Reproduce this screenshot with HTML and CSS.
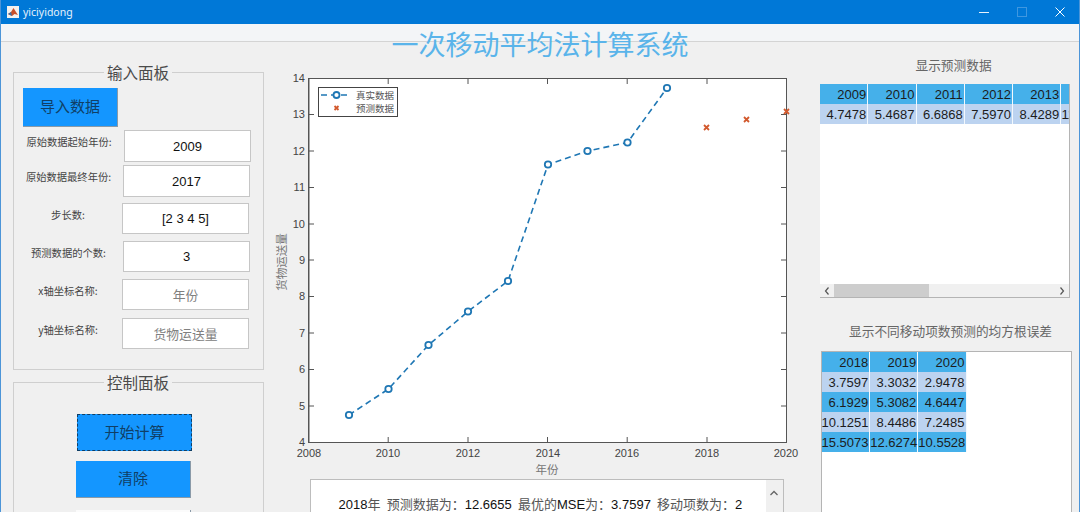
FILE: index.html
```html
<!DOCTYPE html>
<html lang="zh">
<head>
    <meta charset="UTF-8">
    <title>yiciyidong</title>
    <link rel="stylesheet" href="styles.css">
</head>
<body>
<div class="window">
    <div class="titlebar">
        <svg class="app-icon" viewBox="0 0 12 12" width="12" height="12">
            <rect width="12" height="12" fill="#f4f1ee"/>
            <path d="M1 8 L4 6 L6.5 2 L9 6 L11 9 L7.5 8 L5 10 Z" fill="#c8502a"/>
            <path d="M1 8 L4 6 L5 10 Z" fill="#3d6fa5"/>
        </svg>
        <span class="app-name">yiciyidong</span>
        <div class="win-buttons">
            <svg width="10" height="10" viewBox="0 0 10 10"><path d="M0 5.5 H10" stroke="#e8f2fb" fill="none"/></svg>
            <svg width="10" height="10" viewBox="0 0 10 10"><rect x="0.5" y="0.5" width="9" height="9" stroke="#3f97e0" fill="none"/></svg>
            <svg width="10" height="10" viewBox="0 0 10 10"><path d="M0.5 0.5 L9.5 9.5 M9.5 0.5 L0.5 9.5" stroke="#fff" fill="none"/></svg>
        </div>
    </div>
    <div class="toolbar"></div>
    <h1 class="heading">一次移动平均法计算系统</h1>

    <div class="content">
        <div class="left">
            <div class="panel panel-input">
                <div class="panel-title">输入面板</div>
                <button class="btn btn-import">导入数据</button>
                <div class="row row1"><label>原始数据起始年份:</label><div class="field">2009</div></div>
                <div class="row row2"><label>原始数据最终年份:</label><div class="field">2017</div></div>
                <div class="row row3"><label>步长数:</label><div class="field">[2 3 4 5]</div></div>
                <div class="row row4"><label>预测数据的个数:</label><div class="field">3</div></div>
                <div class="row row5"><label>x轴坐标名称:</label><div class="field muted">年份</div></div>
                <div class="row row6"><label>y轴坐标名称:</label><div class="field muted">货物运送量</div></div>
            </div>
            <div class="panel panel-control">
                <div class="panel-title">控制面板</div>
                <button class="btn btn-start">开始计算</button>
                <button class="btn btn-clear">清除</button>
                <button class="btn btn-exit"></button>
            </div>
        </div>

        <div class="middle">
            <svg class="chart" viewBox="270 58 540 421" width="540" height="421">
                <rect x="308.5" y="78.5" width="478" height="364" fill="#fff" stroke="#555"/>
                <path d="M309.5 79V442" stroke="#aaa" fill="none"/>
                <g stroke="#555" fill="none">
                    <path d="M388.2 442V437 M468 442V437 M547.5 442V437 M627.2 442V437 M707 442V437"/>
                    <path d="M388.2 79V84 M468 79V84 M547.5 79V84 M627.2 79V84 M707 79V84"/>
                    <path d="M309 406H314 M309 369.5H314 M309 333H314 M309 296.5H314 M309 260H314 M309 224H314 M309 187.5H314 M309 151H314 M309 114.5H314"/>
                    <path d="M786 406H781 M786 369.5H781 M786 333H781 M786 296.5H781 M786 260H781 M786 224H781 M786 187.5H781 M786 151H781 M786 114.5H781"/>
                </g>
                <g class="tick tick-y">
                    <text x="305" y="446">4</text><text x="305" y="410">5</text><text x="305" y="373">6</text>
                    <text x="305" y="337">7</text><text x="305" y="300">8</text><text x="305" y="264">9</text>
                    <text x="305" y="228">10</text><text x="305" y="191">11</text><text x="305" y="155">12</text>
                    <text x="305" y="118">13</text><text x="305" y="82">14</text>
                </g>
                <g class="tick tick-x">
                    <text x="309" y="457">2008</text><text x="388" y="457">2010</text><text x="468" y="457">2012</text>
                    <text x="548" y="457">2014</text><text x="627" y="457">2016</text><text x="707" y="457">2018</text>
                    <text x="786" y="457">2020</text>
                </g>
                <text class="axis-name" x="547" y="474">年份</text>
                <text class="axis-name" transform="translate(286 262) rotate(-90)">货物运送量</text>

                <polyline class="series" points="349,415 388.5,389 428.5,345 468,311.5 508,281 548,164.5 587.5,151 627.5,142.5 667,88"/>
                <g class="dots">
                    <circle cx="349" cy="415" r="3.2"/><circle cx="388.5" cy="389" r="3.2"/><circle cx="428.5" cy="345" r="3.2"/>
                    <circle cx="468" cy="311.5" r="3.2"/><circle cx="508" cy="281" r="3.2"/><circle cx="548" cy="164.5" r="3.2"/>
                    <circle cx="587.5" cy="151" r="3.2"/><circle cx="627.5" cy="142.5" r="3.2"/><circle cx="667" cy="88" r="3.2"/>
                </g>
                <path class="cross" d="M704 125 l5 5 m0 -5 l-5 5 M744 117 l5 5 m0 -5 l-5 5 M784 109 l5 5 m0 -5 l-5 5"/>

                <rect x="318.5" y="87.5" width="79" height="29" fill="#fff" stroke="#444"/>
                <path class="series" d="M321 95H350"/>
                <circle class="dot-key" cx="336.5" cy="95" r="3"/>
                <path class="cross" d="M334.5 106 l4 4 m0 -4 l-4 4"/>
                <text class="legend-text" x="356" y="99">真实数据</text>
                <text class="legend-text" x="356" y="112">预测数据</text>
            </svg>
            <div class="result-box">
                <p class="result-line"><span>2018</span><span class="cjk">年 &nbsp;预测数据为：</span><span>12.6655</span><span class="cjk"> &nbsp;最优的</span><span>MSE</span><span class="cjk">为：</span><span>3.7597</span><span class="cjk"> &nbsp;移动项数为：</span><span>2</span></p>
                <div class="vscroll">
                    <svg width="10" height="6" viewBox="0 0 10 6"><path d="M1.5 5 L5 1.5 L8.5 5" stroke="#666" stroke-width="1.3" fill="none"/></svg>
                </div>
            </div>
        </div>

        <div class="right">
            <div class="table-title title-one">显示预测数据</div>
            <div class="table-box box-one">
                <div class="table-clip">
                    <table class="table-wide">
                        <tr class="blue"><td>2009</td><td>2010</td><td>2011</td><td>2012</td><td>2013</td><td>2014</td></tr>
                        <tr class="pale"><td>4.7478</td><td>5.4687</td><td>6.6868</td><td>7.5970</td><td>8.4289</td><td>11.6500</td></tr>
                    </table>
                </div>
                <div class="hscroll">
                    <svg width="6" height="10" viewBox="0 0 6 10"><path d="M4.5 1.5 L1.5 5 L4.5 8.5" stroke="#555" stroke-width="1.2" fill="none"/></svg>
                    <div class="thumb"></div>
                    <svg class="arrow-right" width="6" height="10" viewBox="0 0 6 10"><path d="M1.5 1.5 L4.5 5 L1.5 8.5" stroke="#555" stroke-width="1.2" fill="none"/></svg>
                </div>
            </div>
            <div class="table-title title-two">显示不同移动项数预测的均方根误差</div>
            <div class="table-box box-two">
                <table class="table-short">
                    <tr class="blue"><td>2018</td><td>2019</td><td>2020</td></tr>
                    <tr class="pale"><td>3.7597</td><td>3.3032</td><td>2.9478</td></tr>
                    <tr class="blue"><td>6.1929</td><td>5.3082</td><td>4.6447</td></tr>
                    <tr class="pale"><td>10.1251</td><td>8.4486</td><td>7.2485</td></tr>
                    <tr class="blue"><td>15.5073</td><td>12.6274</td><td>10.5528</td></tr>
                </table>
            </div>
        </div>
    </div>
</div>
</body>
</html>
```

FILE: styles.css
```css
* {
    box-sizing: border-box;
}
html, body {
    margin: 0;
    height: 512px;
    overflow: hidden;
}
body {
    background-color: #f0f0f0;
    font-family: "Liberation Sans", "Noto Sans CJK SC", sans-serif;
}
.window {
    width: 1080px;
    height: 512px;
    overflow: hidden;
    border-left: 1px solid #4c95d8;
    border-right: 1px solid #4c95d8;
}

.titlebar {
    display: flex;
    align-items: center;
    height: 24px;
    margin: 0 -1px;
    padding-left: 7px;
    background-color: #0078d7;
    color: #fff;
}
.app-name {
    margin-left: 4px;
    font-family: "Noto Sans", sans-serif;
    font-size: 10.5px;
    color: #e6f2fb;
}
.win-buttons {
    display: flex;
    gap: 28px;
    margin-left: auto;
    margin-right: 15px;
}
.toolbar {
    height: 18px;
    background-color: #f3f5f7;
    border-bottom: 1px solid #d4d4d4;
}
.heading {
    height: 28px;
    margin: -12px 0 0;
    font-family: "Noto Sans CJK SC", sans-serif;
    font-size: 27px;
    font-weight: 400;
    line-height: 28px;
    text-align: center;
    color: #5ab4ea;
}

.content {
    display: flex;
    align-items: flex-start;
    padding-left: 12px;
}
.left {
    width: 251px;
    padding-top: 14px;
}
.middle {
    width: 540px;
    margin-left: 6px;
}
.right {
    width: 270px;
}

.panel {
    position: relative;
    border: 1px solid #cfcfcf;
}
.panel-input {
    height: 298px;
    padding-top: 15px;
}
.panel-control {
    height: 160px;
    margin-top: 12px;
    padding-top: 31px;
}
.panel-title {
    position: absolute;
    top: -11px;
    left: 90px;
    padding: 0 3px;
    background-color: #f0f0f0;
    font-family: "Noto Sans CJK SC", sans-serif;
    font-size: 15.5px;
    line-height: 20px;
    color: #4a4a4a;
}

.btn {
    display: block;
    padding: 0 0 3px;
    border: 1px solid #8a9aa8;
    border-width: 0 1px 1px 0;
    background-color: #1496ff;
    font-family: "Noto Sans CJK SC", sans-serif;
    font-size: 15px;
    color: #103f66;
}
.btn-import {
    width: 95px;
    height: 39px;
    margin: 0 0 3px 9px;
}
.btn-start {
    width: 115px;
    height: 37px;
    margin-left: 63px;
    border: 1px dashed #103f66;
}
.btn-clear {
    width: 115px;
    height: 37px;
    margin: 10px 0 0 62px;
}
.btn-exit {
    width: 115px;
    height: 37px;
    margin: 12px 0 0 62px;
    background-color: #fbfbfb;
}

.row {
    display: flex;
    align-items: center;
}
.row label {
    width: 110px;
    padding-bottom: 9px;
    font-family: "Noto Sans CJK SC", sans-serif;
    font-size: 10.3px;
    text-align: center;
    color: #444;
}
.row2 label, .row4 label {
    width: 109px;
}
.row3 label, .row5 label, .row6 label {
    width: 108px;
}
.field {
    display: flex;
    align-items: center;
    justify-content: center;
    width: 127px;
    height: 31px;
    background-color: #fff;
    border: 1px solid #c6c6c6;
    font-size: 13px;
    color: #111;
}
.field.muted {
    font-family: "Noto Sans CJK SC", sans-serif;
    font-size: 12.8px;
    color: #808080;
}
.row1 .field {
    height: 32px;
}
.row2 {
    margin-top: 3px;
}
.row2 .field {
    height: 32px;
}
.row3 {
    margin-top: 6px;
}
.row4, .row5 {
    margin-top: 7px;
}
.row6 {
    margin-top: 8px;
}

.chart {
    display: block;
}
.tick text {
    font-size: 11px;
    fill: #444;
}
.tick-y text {
    text-anchor: end;
}
.tick-x text {
    text-anchor: middle;
}
.axis-name {
    font-family: "Noto Sans CJK SC", sans-serif;
    font-size: 11.5px;
    fill: #777;
    text-anchor: middle;
}
.series {
    fill: none;
    stroke: #1f77b4;
    stroke-width: 1.6;
    stroke-dasharray: 6 4;
}
.dots circle, .dot-key {
    fill: #fff;
    stroke: #1f77b4;
    stroke-width: 1.8;
}
.cross {
    fill: none;
    stroke: #d2592d;
    stroke-width: 1.8;
}
.legend-text {
    font-family: "Noto Sans CJK SC", sans-serif;
    font-size: 9.5px;
    fill: #555;
}

.result-box {
    position: relative;
    width: 474px;
    height: 60px;
    margin-left: 40px;
    background-color: #fff;
    border: 1px solid #bdbdbd;
}
.result-line {
    margin: 18px 0 0 28px;
    font-size: 13px;
    line-height: 14px;
    color: #111;
    white-space: nowrap;
}
.result-line .cjk {
    color: #555;
    word-spacing: -0.5px;
}
.vscroll {
    position: absolute;
    top: 0;
    right: 0;
    bottom: 0;
    width: 17px;
    padding-top: 2px;
    background-color: #f0f0f0;
    text-align: center;
}

.table-title {
    font-family: "Noto Sans CJK SC", sans-serif;
    font-size: 12.7px;
    line-height: 14px;
    text-align: center;
    color: #666;
}
.title-one {
    width: 250px;
    margin-left: 19px;
}
.title-two {
    width: 250px;
    margin: 26px 0 0 16px;
}
.table-box {
    background-color: #fff;
    border: 1px solid #b4b4b4;
}
.box-one {
    display: flex;
    flex-direction: column;
    width: 250px;
    height: 214px;
    margin: 12px 0 0 10px;
    border-top: 0;
    border-left: 0;
}
.box-two {
    width: 251px;
    height: 200px;
    margin: 13px 0 0 11px;
}
.table-clip {
    flex: 1;
    overflow: hidden;
}
table {
    border-collapse: collapse;
    table-layout: fixed;
    font-size: 13px;
    color: #1c1c1c;
}
.table-wide {
    width: 290px;
}
.table-short {
    width: 145px;
}
td {
    height: 20px;
    padding: 0 1px 0 0;
    border-right: 1px solid #f2f8fd;
    text-align: right;
    white-space: nowrap;
}
.blue td {
    background-color: #45b0ea;
}
.pale td {
    background-color: #bcd3f0;
}
.hscroll {
    display: flex;
    align-items: center;
    height: 13px;
    padding: 0 4px;
    background-color: #f0f0f0;
}
.thumb {
    width: 95px;
    height: 13px;
    margin-left: 4px;
    background-color: #cdcdcd;
}
.arrow-right {
    margin-left: auto;
}
```
